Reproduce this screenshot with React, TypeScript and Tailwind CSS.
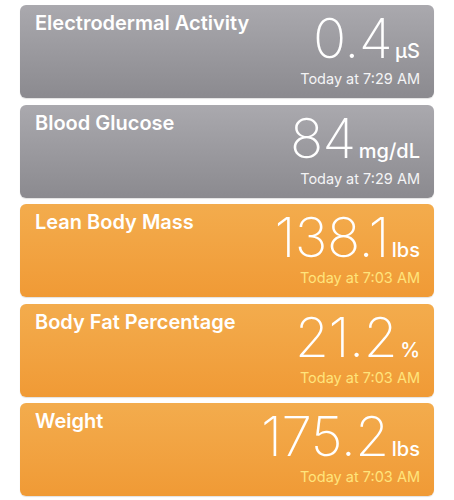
import React from 'react';

type Metric = {
  title: string;
  value: string;
  unit: string;
  time: string;
  tone: 'gray' | 'orange';
};

const metrics: Metric[] = [
  { title: 'Electrodermal Activity', value: '0.4', unit: 'µS', time: 'Today at 7:29 AM', tone: 'gray' },
  { title: 'Blood Glucose', value: '84', unit: 'mg/dL', time: 'Today at 7:29 AM', tone: 'gray' },
  { title: 'Lean Body Mass', value: '138.1', unit: 'lbs', time: 'Today at 7:03 AM', tone: 'orange' },
  { title: 'Body Fat Percentage', value: '21.2', unit: '%', time: 'Today at 7:03 AM', tone: 'orange' },
  { title: 'Weight', value: '175.2', unit: 'lbs', time: 'Today at 7:03 AM', tone: 'orange' },
];

function MetricCard({ m }: { m: Metric }) {
  const bg =
    m.tone === 'gray'
      ? 'bg-gradient-to-b from-[#aaa9ae] to-[#8b8a8f]'
      : 'bg-gradient-to-b from-[#f3ac4d] to-[#f09a35]';
  const timeColor = m.tone === 'gray' ? 'text-[#f4f4f5]' : 'text-[#ffe47c]';

  return (
    <div className={`h-[93px] rounded-[6px] ${bg} shadow-[0_1px_1px_rgba(0,0,0,0.12)] pl-[15px] pr-[14px] pt-[6px] flex justify-between items-start text-white`}>
      <div className="text-[20px] leading-[20px] font-semibold mt-[2px]">{m.title}</div>
      <div className="flex flex-col items-end">
        <div className="flex items-baseline">
          <span className="text-[55px] leading-[55px] font-extralight tracking-[-0.5px]">{m.value}</span>
          <span className="text-[20px] font-medium ml-[3px]">{m.unit}</span>
        </div>
        <div className={`text-[14.5px] leading-[18px] mt-[4px] ${timeColor}`}>{m.time}</div>
      </div>
    </div>
  );
}

export default function App() {
  return (
    <div className="w-[454px] h-[500px] bg-white overflow-hidden pt-[5px] px-[20px] flex flex-col gap-[6.5px] font-['Inter','Liberation_Sans',sans-serif]">
      {metrics.map((m) => (
        <MetricCard key={m.title} m={m} />
      ))}
    </div>
  );
}
